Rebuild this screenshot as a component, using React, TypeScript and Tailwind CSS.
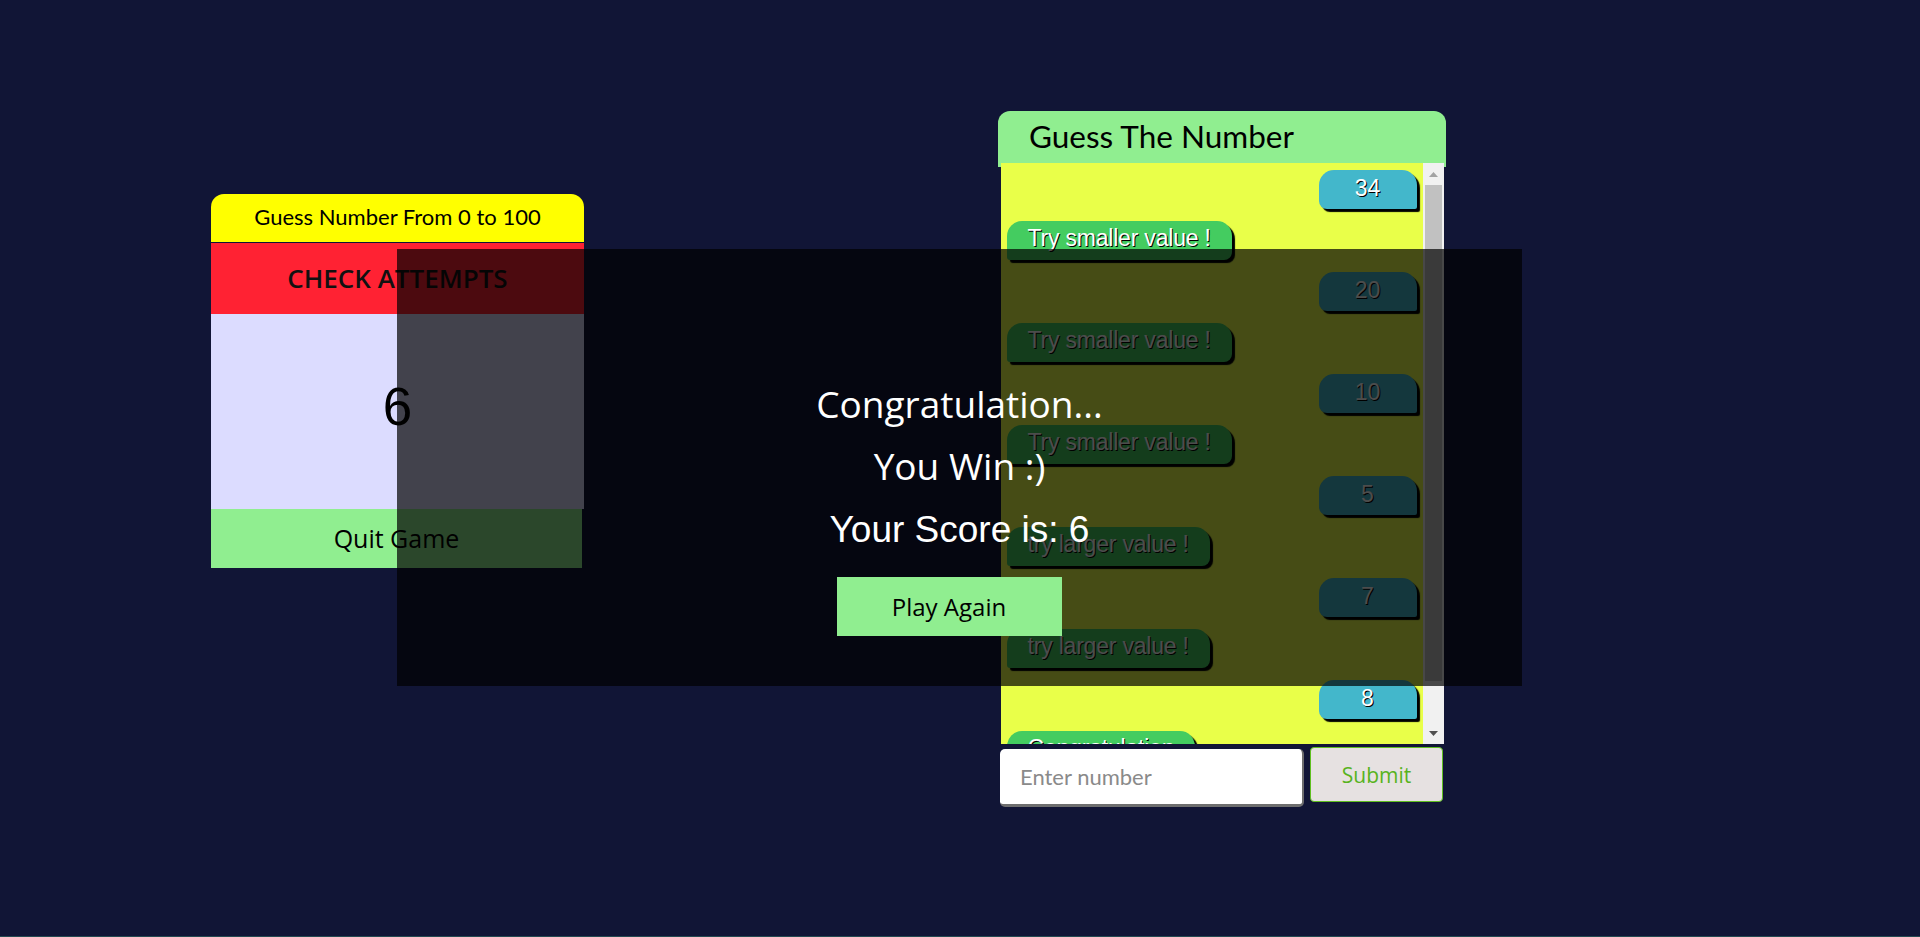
const guesses = [
  { kind: "num", text: "34" },
  { kind: "msg", text: "Try smaller value !" },
  { kind: "num", text: "20" },
  { kind: "msg", text: "Try smaller value !" },
  { kind: "num", text: "10" },
  { kind: "msg", text: "Try smaller value !" },
  { kind: "num", text: "5" },
  { kind: "msg", text: "try larger value !" },
  { kind: "num", text: "7" },
  { kind: "msg", text: "try larger value !" },
  { kind: "num", text: "8" },
  { kind: "msg", text: "Congratulation" },
];

function Bubble({ kind, text }: { kind: string; text: string }) {
  if (kind === "num") {
    return (
      <div className="self-end w-[98px] h-[39px] shrink-0 pb-[3px] flex items-center justify-center bg-[#43b7cb] rounded-tl-[15px] rounded-tr-[15px] rounded-bl-[8px] rounded-br-[2px] shadow-[3px_3px_1px_#000] text-white text-[23px] font-['Liberation_Sans',Arial,sans-serif] [text-shadow:1px_1px_0_#000]">
        {text}
      </div>
    );
  }
  return (
    <div className="self-start h-[39px] shrink-0 px-[21px] pb-[4px] flex items-center bg-[#44cc60] rounded-tl-[15px] rounded-tr-[15px] rounded-br-[8px] rounded-bl-[3px] shadow-[3px_3px_1px_#000] text-white text-[23px] tracking-[-0.2px] font-['Liberation_Sans',Arial,sans-serif] [text-shadow:1px_1px_0_#000]">
      {text}
    </div>
  );
}

export default function App() {
  return (
    <div className="relative h-[937px] w-full flex flex-col bg-[#111536] overflow-hidden">
      <main className="flex-1 flex items-start pt-[111px] pl-[211px]">
        {/* Attempts card */}
        <div className="mt-[83px] w-[373px] flex flex-col">
          <div className="h-[48px] pb-[4px] rounded-t-[13px] bg-[#ffff00] flex items-center justify-center text-[22px] text-black font-['Lato',sans-serif]">
            Guess Number From 0 to 100
          </div>
          <div className="h-px" />
          <button className="h-[71px] bg-[#ff2233] text-[26px] font-semibold text-[#111] font-['Open_Sans',sans-serif]">
            CHECK ATTEMPTS
          </button>
          <div className="h-[195px] pb-[10px] bg-[#dcdcff] flex items-center justify-center text-[53px] text-black font-['Liberation_Sans',Arial,sans-serif]">
            6
          </div>
          <button className="h-[59px] w-[371px] bg-[#90ee90] text-[25px] text-black font-['Open_Sans',sans-serif]">
            Quit Game
          </button>
        </div>

        {/* Chat card */}
        <div className="ml-[414px] w-[448px] flex flex-col items-center">
          <div className="w-full h-[56px] pb-[4px] pl-[31px] rounded-t-[12px] bg-[#90ee90] flex items-center text-[31.5px] text-black font-['Lato',sans-serif]">
            Guess The Number
          </div>
          <div className="relative -mt-[4px] w-[443px] h-[581px] flex bg-[#e9ff49]">
            <div className="flex-1 overflow-hidden px-[6px] pt-[7px] flex flex-col gap-[12px]">
              {guesses.map((g, i) => (
                <Bubble key={i} kind={g.kind} text={g.text} />
              ))}
            </div>
            <div className="w-[21px] bg-[#f1f1f1] flex flex-col items-center">
              <div className="h-[22px] flex items-center justify-center">
                <svg width="9" height="5" viewBox="0 0 9 5"><path d="M0 5 L4.5 0 L9 5 Z" fill="#a3a3a3" /></svg>
              </div>
              <div className="w-[17px] h-[496px] bg-[#c1c1c1]" />
              <div className="flex-1" />
              <div className="h-[22px] flex items-center justify-center">
                <svg width="9" height="5" viewBox="0 0 9 5"><path d="M0 0 L4.5 5 L9 0 Z" fill="#505050" /></svg>
              </div>
            </div>
          </div>
          <div className="mt-[3px] w-full flex items-start gap-[6px] pl-[2px]">
            <input
              placeholder="Enter number"
              className="mt-[2px] w-[304px] h-[58px] pl-[20px] bg-white rounded-[5px] border-b-[3px] border-r-[2px] border-[#6e6e6e] text-[22px] font-['Lato',sans-serif] placeholder:text-[#8a8a8a] outline-none"
            />
            <button className="w-[133px] h-[55px] pt-[2px] rounded-[4px] border border-[#5fbf1f] bg-[#e6e1e1] text-[21px] text-[#58b31e] font-['Open_Sans',sans-serif]">
              Submit
            </button>
          </div>
        </div>
      </main>
      <div className="h-px bg-[#244a52]" />

      {/* Win overlay */}
      <div className="absolute left-[397px] top-[249px] w-[1125px] h-[437px] bg-black/70 flex flex-col items-center pt-[130px] text-white">
        <div className="text-[37px] leading-[50px] font-['Open_Sans',sans-serif]">Congratulation...</div>
        <div className="mt-[12px] text-[37px] leading-[50px] font-['Open_Sans',sans-serif]">You Win :)</div>
        <div className="mt-[18px] text-[37px] leading-[42px] font-['Liberation_Sans',Arial,sans-serif]">Your Score is: 6</div>
        <button className="mt-[26px] mr-[21px] w-[225px] h-[59px] bg-[#90ee90] text-[24px] text-black font-['Open_Sans',sans-serif]">
          Play Again
        </button>
      </div>
    </div>
  );
}
